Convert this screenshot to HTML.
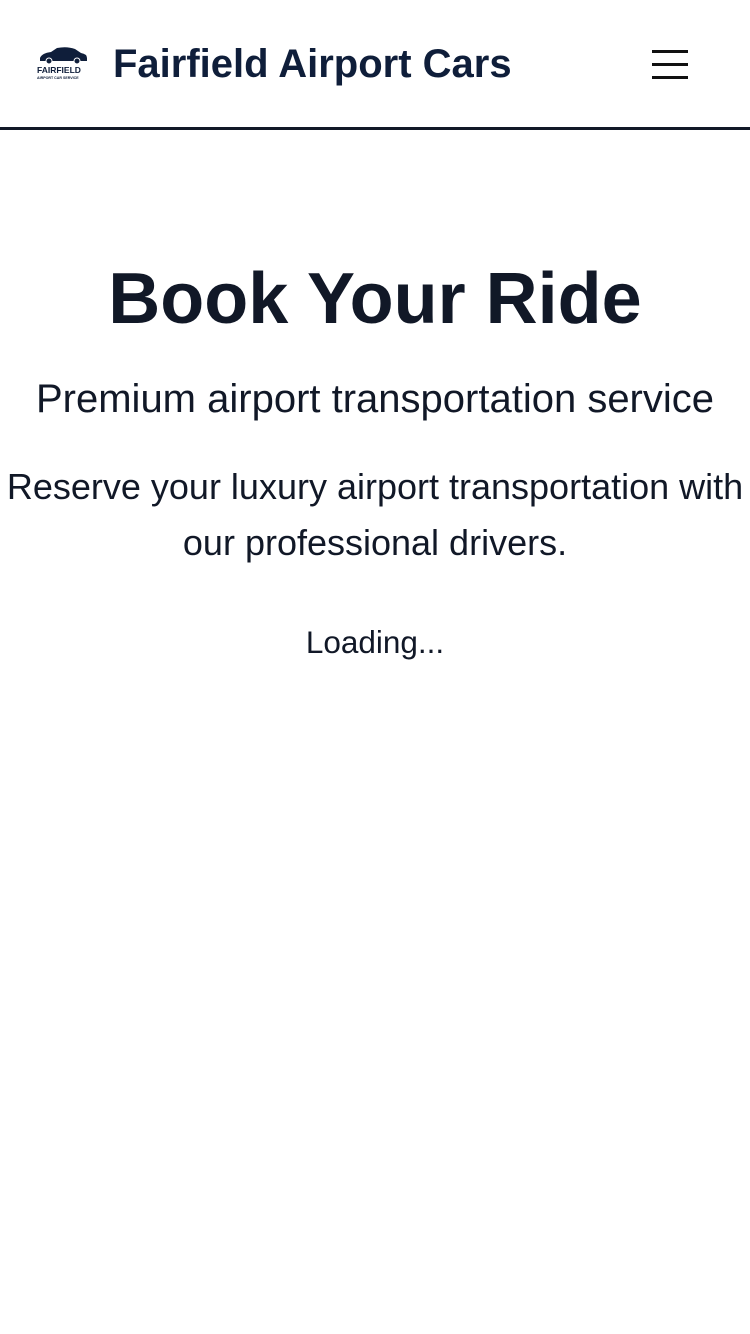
<!DOCTYPE html>
<html><head><style>
body{margin:0;width:750px;height:1334px;background:#fff;font-family:"Liberation Sans",sans-serif;color:#111827;}
.hdr{height:127px;border-bottom:3px solid #111827;position:relative;}
.logo{position:absolute;left:37px;top:46px;width:54px;}
.title{position:absolute;left:113px;top:42px;font-size:40px;font-weight:bold;color:#0f1e3a;white-space:nowrap;}
.menu{position:absolute;left:652px;top:50px;width:36px;}
.menu div{height:3px;background:#111;margin-bottom:10px;}
h1{margin:0;position:absolute;top:258px;width:750px;text-align:center;font-size:72px;font-weight:bold;}
.p1{position:absolute;top:377px;width:750px;text-align:center;font-size:40px;white-space:nowrap;}
.p2{position:absolute;top:459px;width:750px;text-align:center;font-size:36px;line-height:56px;white-space:nowrap;}
.p3{position:absolute;top:624px;width:750px;text-align:center;font-size:31.5px;}
</style></head><body>
<div class="hdr">
<svg class="logo" viewBox="0 0 54 34" width="54" height="34">
<path d="M3 12 Q5 7 14 6 L20 2 Q30 0 38 3 L44 7 Q50 8 50 12 L50 15 L3 15 Z" fill="#0f1e3a"/>
<circle cx="12" cy="15" r="3" fill="#0f1e3a" stroke="#fff"/><circle cx="40" cy="15" r="3" fill="#0f1e3a" stroke="#fff"/>
<text x="0" y="27" font-size="8.5" font-weight="bold" fill="#0f1e3a" font-family="Liberation Sans">FAIRFIELD</text>
<text x="0" y="33" font-size="3.6" font-weight="bold" fill="#0f1e3a" font-family="Liberation Sans">AIRPORT CAR SERVICE</text>
</svg>
<div class="title">Fairfield Airport Cars</div>
<div class="menu"><div></div><div></div><div></div></div>
</div>
<h1>Book Your Ride</h1>
<div class="p1">Premium airport transportation service</div>
<div class="p2">Reserve your luxury airport transportation with<br>our professional drivers.</div>
<div class="p3">Loading...</div>
</body></html>
